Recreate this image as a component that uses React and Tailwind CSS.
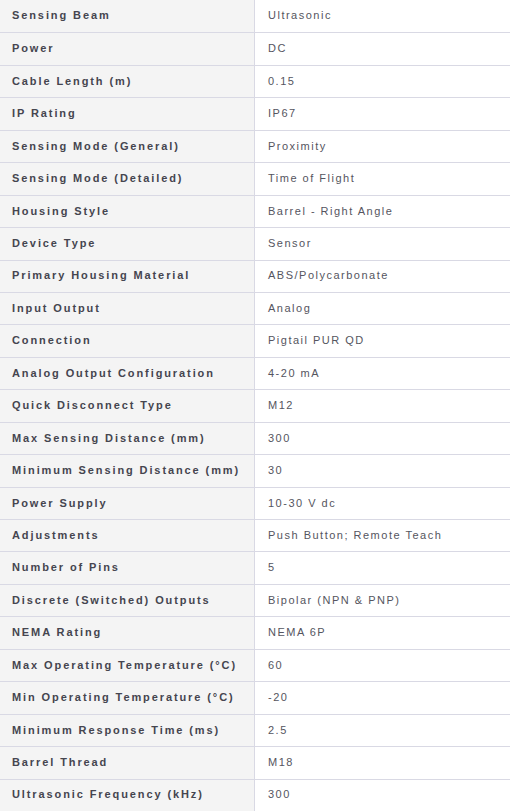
import React from 'react';

const specs = [
  ['Sensing Beam', 'Ultrasonic'],
  ['Power', 'DC'],
  ['Cable Length (m)', '0.15'],
  ['IP Rating', 'IP67'],
  ['Sensing Mode (General)', 'Proximity'],
  ['Sensing Mode (Detailed)', 'Time of Flight'],
  ['Housing Style', 'Barrel - Right Angle'],
  ['Device Type', 'Sensor'],
  ['Primary Housing Material', 'ABS/Polycarbonate'],
  ['Input Output', 'Analog'],
  ['Connection', 'Pigtail PUR QD'],
  ['Analog Output Configuration', '4-20 mA'],
  ['Quick Disconnect Type', 'M12'],
  ['Max Sensing Distance (mm)', '300'],
  ['Minimum Sensing Distance (mm)', '30'],
  ['Power Supply', '10-30 V dc'],
  ['Adjustments', 'Push Button; Remote Teach'],
  ['Number of Pins', '5'],
  ['Discrete (Switched) Outputs', 'Bipolar (NPN & PNP)'],
  ['NEMA Rating', 'NEMA 6P'],
  ['Max Operating Temperature (°C)', '60'],
  ['Min Operating Temperature (°C)', '-20'],
  ['Minimum Response Time (ms)', '2.5'],
  ['Barrel Thread', 'M18'],
  ['Ultrasonic Frequency (kHz)', '300'],
];

const App = () => {
  return (
    <div className="w-[510px] bg-white font-['Liberation_Sans',Arial,sans-serif] text-[11px]">
      {specs.map(([label, value], i) => (
        <div
          key={label}
          className={`flex h-[32.45px] ${i > 0 ? 'border-t border-[#d9d9e4]' : ''}`}
        >
          <div className="w-[255px] shrink-0 bg-[#f4f4f4] border-r border-[#d9d9e4] pl-[12px] pb-[1px] flex items-center font-bold tracking-[1.9px] text-[#45454f]">
            {label}
          </div>
          <div className="flex-1 pl-[13px] pb-[1px] flex items-center tracking-[1.5px] text-[#555560]">
            {value}
          </div>
        </div>
      ))}
    </div>
  );
};

export default App;
